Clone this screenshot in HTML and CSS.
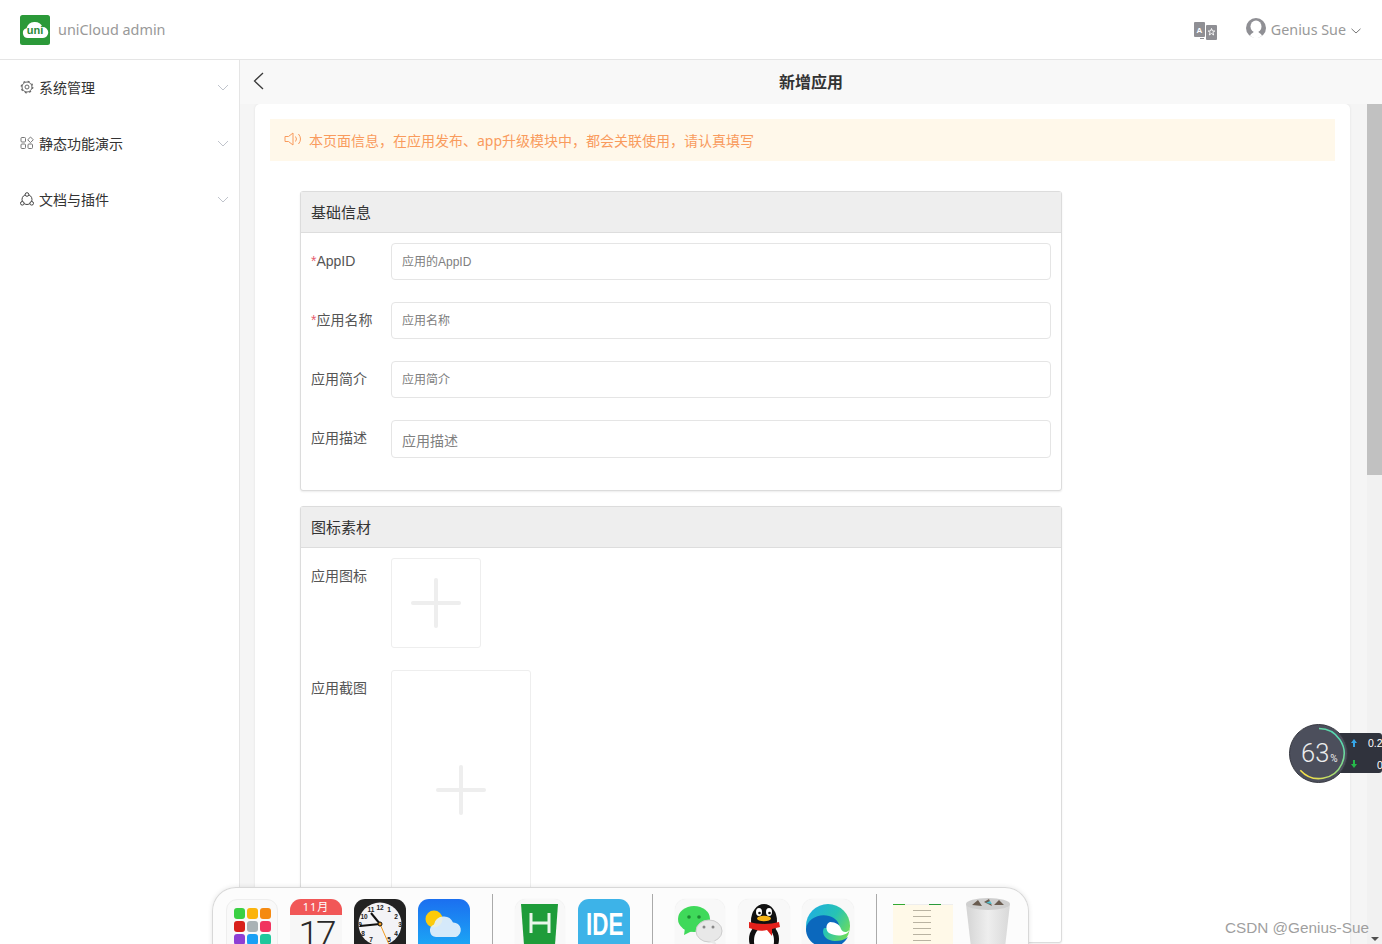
FILE: index.html
```html
<!DOCTYPE html>
<html lang="zh">
<head>
<meta charset="utf-8">
<title>uniCloud admin</title>
<link rel="stylesheet" href="styles.css">
</head>
<body>
<header class="topbar">
  <div class="brand">
    <svg class="logo" viewBox="0 0 30 30"><rect width="30" height="30" rx="2.500" fill="#2b9939"/><path d="M8 23a5 5 0 0 1-1.500-9.800a8.500 8.500 0 0 1 16-1.200a5.400 5.400 0 0 1 .5 11z" fill="#fff"/><text x="15" y="19" class="logo-text">uni</text></svg>
    <span class="brand-name">uniCloud admin</span>
  </div>
  <div class="top-actions">
    <svg class="lang" viewBox="0 0 23 18"><rect x="0" y="0" width="11" height="15" rx="1" fill="#8f8f94"/><rect x="12" y="3" width="11" height="15" rx="1" fill="#8f8f94"/><text x="5.500" y="10.500" class="lang-a">A</text><path d="M17.500 6.500l1 2.500h2.300l-1.900 1.500.8 2.500-2.200-1.500-2.200 1.500.8-2.500-1.900-1.500h2.300z" fill="none" stroke="#fff" stroke-width=".9"/><path d="M6 16.500h4" stroke="#8f8f94"/></svg>
    <div class="user">
      <svg class="avatar" viewBox="0 0 20 20"><circle cx="10" cy="10" r="10" fill="#8f8f94"/><ellipse cx="10" cy="8.500" rx="5.500" ry="6" fill="#fff"/><path d="M4 17.500c1.500-2.500 3-2.500 4-4h4c1 1.500 2.500 1.500 4 4c-2 2-3.500 2.500-6 2.500s-4-.5-6-2.500z" fill="#fff"/></svg>
      <span class="user-name">Genius Sue</span>
      <svg class="chev-small" viewBox="0 0 10 6"><path d="M.5.800 5 5 9.500.800" fill="none" stroke="#777" stroke-width="1"/></svg>
    </div>
  </div>
</header>

<div class="shell">
  <aside class="sidebar">
    <div class="menu-item">
      <svg class="menu-icon" viewBox="0 0 14 14"><circle cx="7" cy="7" r="5" fill="none" stroke="#666" stroke-width="1"/><circle cx="7" cy="7" r="5.800" fill="none" stroke="#666" stroke-width="1.200" stroke-dasharray="2 2.550"/><circle cx="7" cy="7" r="2" fill="none" stroke="#666" stroke-width="1"/></svg>
      <span class="menu-label">系统管理</span>
      <svg class="chev" viewBox="0 0 12 7"><path d="M1 1l5 5 5-5" fill="none" stroke="#c0c4cc" stroke-width="1"/></svg>
    </div>
    <div class="menu-item">
      <svg class="menu-icon" viewBox="0 0 14 14"><rect x="1" y="1.500" width="4.500" height="4.500" rx="1" fill="none" stroke="#777"/><path d="M10.500 1l2.800 2.800-2.800 2.800-2.800-2.800z" fill="none" stroke="#777"/><rect x="1" y="8" width="4.500" height="4.500" rx="1" fill="none" stroke="#777"/><rect x="8" y="8" width="4.500" height="4.500" rx="1" fill="none" stroke="#777"/></svg>
      <span class="menu-label">静态功能演示</span>
      <svg class="chev" viewBox="0 0 12 7"><path d="M1 1l5 5 5-5" fill="none" stroke="#c0c4cc" stroke-width="1"/></svg>
    </div>
    <div class="menu-item">
      <svg class="menu-icon" viewBox="0 0 14 14"><circle cx="7" cy="7.500" r="5" fill="none" stroke="#444" stroke-width="1"/><circle cx="7" cy="2.500" r="1.800" fill="#fff" stroke="#444"/><circle cx="2.300" cy="11.300" r="1.800" fill="#fff" stroke="#444"/><circle cx="11.700" cy="11.300" r="1.800" fill="#fff" stroke="#444"/></svg>
      <span class="menu-label">文档与插件</span>
      <svg class="chev" viewBox="0 0 12 7"><path d="M1 1l5 5 5-5" fill="none" stroke="#c0c4cc" stroke-width="1"/></svg>
    </div>
  </aside>

  <main class="main">
    <div class="navbar">
      <svg class="back" viewBox="0 0 11 18"><path d="M10 1 1.500 9l8.500 8" fill="none" stroke="#3a3a3a" stroke-width="1.300"/></svg>
      <span class="nav-title">新增应用</span>
    </div>
    <div class="content">
      <div class="card">
        <div class="notice">
          <svg class="speaker" viewBox="0 0 18 14"><path d="M1 4.500h3.500L9 1v12L4.500 9.500H1z" fill="none" stroke="#f99b5d" stroke-width="1"/><path d="M11.500 4.500a4 4 0 0 1 0 5M14.500 2a8 8 0 0 1 0 10" fill="none" stroke="#f99b5d" stroke-width="1"/></svg>
          <span class="notice-text">本页面信息，在应用发布、app升级模块中，都会关联使用，请认真填写</span>
        </div>
        <section class="panel panel-basic">
          <h3 class="panel-head">基础信息</h3>
          <div class="panel-body">
            <div class="field"><label class="field-label"><i class="req">*</i>AppID</label><div class="input small">应用的AppID</div></div>
            <div class="field"><label class="field-label"><i class="req">*</i>应用名称</label><div class="input small">应用名称</div></div>
            <div class="field"><label class="field-label">应用简介</label><div class="input small">应用简介</div></div>
            <div class="field"><label class="field-label">应用描述</label><div class="input textarea">应用描述</div></div>
          </div>
        </section>
        <section class="panel panel-assets">
          <h3 class="panel-head">图标素材</h3>
          <div class="panel-body">
            <div class="field"><label class="field-label">应用图标</label><div class="upload upload-icon"><span class="plus"></span></div></div>
            <div class="field"><label class="field-label">应用截图</label><div class="upload upload-shot"><span class="plus"></span></div></div>
          </div>
        </section>
      </div>
      <div class="scrollbar">
        <div class="thumb"></div>
        <span class="arrow"></span>
      </div>
    </div>
  </main>
</div>

<div class="speed">
  <div class="speed-rates"><span class="rate"><i class="up"></i><b>0.2</b></span><span class="rate rate-low"><i class="down"></i><b class="rate-zero">0</b></span></div>
  <div class="gauge">
    <svg class="gauge-ring" viewBox="0 0 60 60"><defs><linearGradient id="g" x1="1" y1="0" x2=".2" y2="1"><stop offset="0" stop-color="#3bd6c6"/><stop offset=".6" stop-color="#9ade7a"/><stop offset="1" stop-color="#f4e04a"/></linearGradient></defs><circle cx="30" cy="30" r="29.500" fill="#4c4f5c"/><circle cx="30" cy="30" r="29.500" fill="none" stroke="#35373f"/><path d="M30.500 4.500A25.500 25.500 0 1 1 11.500 47" fill="none" stroke="url(#g)" stroke-width="1.600"/></svg>
    <span class="gauge-num">63<small>%</small></span>
  </div>
</div>

<div class="dock">
  <div class="tile tile-launch">
    <div class="dots"><i style="background:#3ad043"></i><i style="background:#fbb40d"></i><i style="background:#f58a11"></i><i style="background:#d8201a"></i><i style="background:#a9b2b5"></i><i style="background:#f1345f"></i><i style="background:#8e3fd4"></i><i style="background:#1aa0f5"></i><i style="background:#1fc79c"></i></div>
  </div>
  <div class="tile tile-cal"><div class="cal-top">11月</div><div class="cal-day">17</div></div>
  <svg class="tile" viewBox="0 0 52 60"><rect width="52" height="62" rx="11" fill="#222"/><circle cx="26" cy="25" r="21.500" fill="#f3f3f6"/><g class="clock-nums"><text x="26" y="11">12</text><text x="17" y="13">11</text><text x="10" y="20">10</text><text x="6" y="28">9</text><text x="9" y="37">8</text><text x="17" y="43">7</text><text x="35" y="13">1</text><text x="42" y="20">2</text><text x="46" y="28">3</text><text x="42" y="37">4</text><text x="35" y="43">5</text></g><path d="M26 25 17 14" stroke="#111" stroke-width="2"/><path d="M26 25 6 27" stroke="#111" stroke-width="2"/><path d="M26 25 37 50" stroke="#f19a1e" stroke-width="1"/><circle cx="26" cy="25" r="2" fill="#f19a1e" stroke="#111"/></svg>
  <svg class="tile" viewBox="0 0 52 60"><defs><linearGradient id="sky" x1="0" y1="0" x2="0" y2="1"><stop offset="0" stop-color="#1b6ff0"/><stop offset="1" stop-color="#1cb8f7"/></linearGradient></defs><rect width="52" height="62" rx="11" fill="url(#sky)"/><circle cx="16" cy="20" r="8.500" fill="#fccb0a"/><path d="M18 38a6.500 6.500 0 0 1-2-12.500a10 10 0 0 1 19-2a7.500 7.500 0 0 1 3 14.500z" fill="#e3f0fa" opacity=".93"/></svg>
  <span class="dock-sep"></span>
  <div class="tile tile-soft tile-narrow"><svg class="full" viewBox="0 0 50 60"><path d="M6 5h37l-3 41-16 9-15-9z" fill="#1e9c3a"/><path d="M16 14v20M34 14v20M16 24h18" stroke="#e9f6ea" stroke-width="3" fill="none"/></svg></div>
  <div class="tile tile-ide"><span class="ide-text">IDE</span></div>
  <span class="dock-sep"></span>
  <div class="tile tile-soft tile-narrow"><svg class="full" viewBox="0 0 50 60"><ellipse cx="19" cy="20" rx="16" ry="13" fill="#3fd95a"/><path d="M10 29l-1 7 8-4z" fill="#3fd95a"/><circle cx="14" cy="18" r="1.800" fill="#1e8a33"/><circle cx="24" cy="18" r="1.800" fill="#1e8a33"/><ellipse cx="34" cy="32" rx="13" ry="11" fill="#e8e8e8" stroke="#ccc"/><path d="M39 41l3 5-8-3z" fill="#e8e8e8"/><circle cx="29" cy="28" r="1.500" fill="#888"/><circle cx="38" cy="28" r="1.500" fill="#888"/></svg></div>
  <div class="tile tile-soft"><svg class="full" viewBox="0 0 52 60"><ellipse cx="26" cy="22" rx="13" ry="17" fill="#111"/><ellipse cx="26" cy="40" rx="15" ry="16" fill="#111"/><ellipse cx="26" cy="42" rx="10" ry="14" fill="#fff"/><ellipse cx="21" cy="13" rx="3" ry="4" fill="#fff"/><ellipse cx="31" cy="13" rx="3" ry="4" fill="#fff"/><circle cx="21.500" cy="14" r="1.300" fill="#111"/><circle cx="31.500" cy="14" r="1.300" fill="#111"/><ellipse cx="26" cy="19.500" rx="7" ry="2.800" fill="#f7b416"/><path d="M11 23c9 2.500 21 2.500 30 0l1 5-8 2v7l-5-6c-4 1-8 1-11 0l-7-2z" fill="#e3201b"/></svg></div>
  <div class="tile tile-soft"><svg class="full" viewBox="0 0 52 60"><defs><linearGradient id="edge" x1="0" y1="0" x2="1" y2=".6"><stop offset="0" stop-color="#1dabe8"/><stop offset=".6" stop-color="#27c3b4"/><stop offset="1" stop-color="#6ddc5d"/></linearGradient></defs><circle cx="26" cy="27" r="22" fill="url(#edge)"/><path d="M4 30C5 20 17 14 27 17c7 2 11 7 10 12H22c-3 5 1 13 11 13 5 0 9-1 13-4-5 8-12 12-21 11C13 48 4 41 4 30z" fill="#0b68bd"/><path d="M28 23c6 0 10 3 11 7 2 5 9 3 9-1l-1 3c-3 5-13 6-20 2-4-3-3-10 1-11z" fill="#fff"/></svg></div>
  <span class="dock-sep"></span>
  <div class="tile thumb-doc">
    <div class="doc-top"></div>
    <div class="doc-lines"><i></i><i></i><i></i><i></i><i></i><i></i></div>
    <div class="doc-foot"><span class="doc-green"></span></div>
  </div>
  <svg class="trash" viewBox="0 0 46 60"><defs><linearGradient id="bin" x1="0" x2="1"><stop offset="0" stop-color="#d4d4d4"/><stop offset=".5" stop-color="#eee"/><stop offset="1" stop-color="#d8d8d8"/></linearGradient></defs><path d="M1 8h44l-6 52H7z" fill="url(#bin)"/><ellipse cx="23" cy="8" rx="22" ry="6" fill="#cfcfcf"/><path d="M7 9l6-5 4 6zM19 6l5-3 3 7zM29 9l5-5 5 5z" fill="#6a5c50"/><path d="M21 7l4-2 2 3z" fill="#4ec6d8"/></svg>
</div>

<div class="watermark">CSDN @Genius-Sue</div>
</body>
</html>
```
FILE: styles.css
```css
* { box-sizing: border-box; }
html, body { margin: 0; height: 100%; overflow: hidden; }
body {
  position: relative;
  width: 1382px;
  height: 944px;
  display: flex;
  flex-direction: column;
  font-family: "Noto Sans", "Noto Sans CJK SC", sans-serif;
  font-size: 14px;
  color: #333;
  background: #fff;
}
.topbar {
  height: 60px;
  flex: none;
  display: flex;
  justify-content: space-between;
  align-items: center;
  padding: 0 21px 0 20px;
  border-bottom: 1px solid #e5e5e5;
  background: #fff;
}
.brand { display: flex; align-items: center; gap: 8px; }
.logo { width: 30px; height: 30px; display: block; }
.logo-text { font-family: "Liberation Sans", sans-serif; font-size: 11px; font-weight: 700; fill: #2b8a3a; text-anchor: middle; }
.brand-name { font-size: 14.400px; color: #999; }
.top-actions { display: flex; align-items: center; gap: 29px; }
.lang { width: 23px; height: 18px; display: block; margin-top: 3px; }
.lang-a { font-family: "Liberation Sans", sans-serif; font-size: 8px; font-weight: 700; fill: #fff; text-anchor: middle; }
.user { display: flex; align-items: center; gap: 5px; color: #999; }
.avatar { width: 20px; height: 20px; display: block; margin-top: -3px; }
.user-name { font-size: 14.300px; line-height: 20px; }
.chev-small { width: 10px; height: 6px; display: block; margin-top: 3px; }
.shell { flex: 1; min-height: 0; display: flex; }
.sidebar { width: 240px; flex: none; border-right: 1px solid #e5e5e5; background: #fff; }
.menu-item { height: 56px; display: flex; align-items: center; padding: 0 10px 2px 20px; color: #333; }
.menu-icon { width: 14px; height: 14px; display: block; margin-right: 5px; }
.menu-label { flex: 1; font-size: 14px; }
.chev { width: 12px; height: 7px; display: block; }
.main { flex: 1; min-width: 0; display: flex; flex-direction: column; background: #f5f5f5; }
.navbar {
  height: 44px;
  flex: none;
  position: relative;
  display: flex;
  align-items: center;
  justify-content: center;
  background: #f8f8f8;
}
.back { position: absolute; left: 13px; top: 12px; width: 11px; height: 18px; }
.nav-title { font-size: 16px; font-weight: 700; color: #333; margin-top: -2px; }
.content { flex: 1; min-height: 0; display: flex; justify-content: space-between; padding-left: 15px; }
.card {
  width: 1095px;
  height: 860px;
  padding: 15px;
  background: #fff;
  border-radius: 5px 5px 0 0;
  box-shadow: 0 0 3px rgba(0, 0, 0, .08);
}
.notice {
  height: 42px;
  display: flex;
  align-items: center;
  gap: 7px;
  padding-left: 14px;
  background: #fff8ea;
  color: #f99b5d;
  font-size: 14px;
}
.notice-text { line-height: 42px; padding-top: 2px; }
.speaker { width: 18px; height: 14px; display: block; margin-top: -3px; }
.panel {
  width: 762px;
  margin-left: 30px;
  background: #fff;
  border: 1px solid #dcdcdc;
  border-radius: 3px;
  box-shadow: 0 1px 2px rgba(0, 0, 0, .08);
}
.panel-basic { margin-top: 30px; height: 300px; }
.panel-assets { margin-top: 15px; height: 437px; }
.panel-head {
  margin: 0;
  height: 41px;
  padding-left: 10px;
  font-size: 15px;
  font-weight: 400;
  line-height: 40px;
  color: #333;
  background: #eee;
  border-bottom: 1px solid #ddd;
}
.panel-body { padding: 10px; }
.field { display: flex; margin-bottom: 22px; }
.field-label {
  width: 80px;
  flex: none;
  font-family: "Liberation Sans", "Noto Sans CJK SC", sans-serif;
  line-height: 36px;
  font-size: 14px;
  color: #555;
}
.req { font-style: normal; color: #e65d6e; }
.input {
  flex: 1;
  height: 37px;
  padding-left: 10px;
  font-family: "Liberation Sans", "Noto Sans CJK SC", sans-serif;
  line-height: 36px;
  border: 1px solid #e5e5e5;
  border-radius: 4px;
  color: #808080;
}
.small { font-size: 12px; }
.textarea { height: 38px; font-size: 14px; line-height: 40px; }
.upload {
  position: relative;
  display: flex;
  align-items: center;
  justify-content: center;
  border: 1px solid #eee;
  border-radius: 3px;
}
.upload-icon { width: 90px; height: 90px; }
.upload-shot { width: 140px; height: 240px; }
.plus { position: relative; width: 50px; height: 50px; display: block; }
.plus::before, .plus::after { content: ""; position: absolute; background: #eee; border-radius: 2px; }
.plus::before { left: 0; right: 0; top: 23px; height: 4px; }
.plus::after { top: 0; bottom: 0; left: 23px; width: 4px; }
.scrollbar { position: relative; width: 15px; flex: none; background: #f1f1f1; }
.thumb { height: 371px; background: #c1c1c1; }
.arrow {
  position: absolute;
  left: 4px;
  bottom: 3px;
  width: 0;
  height: 0;
  border: 4px solid transparent;
  border-top-color: #505050;
  border-bottom: 0;
}
.speed { position: absolute; left: 1288px; top: 723px; width: 94px; height: 61px; }
.speed-rates {
  position: absolute;
  left: 30px;
  top: 10px;
  width: 64px;
  height: 40px;
  padding-left: 33px;
  background: #30333d;
  border-radius: 0 3px 3px 0;
  display: flex;
  flex-direction: column;
}
.rate { position: relative; display: flex; height: 20px; align-items: center; justify-content: flex-end; font-size: 10.500px; color: #fff; white-space: nowrap; }
.rate-low { top: 2px; }
.rate b { font-weight: 400; position: absolute; left: 17px; font-family: "Liberation Sans", sans-serif; }
.rate .rate-zero { left: 26px; }
.up, .down { position: absolute; left: 0; top: 6px; width: 0; height: 0; border: 3.500px solid transparent; }
.rate .up { left: 0; border-bottom: 4px solid #36a6e8; border-top: 0; }
.rate .up::after, .rate .down::after { content: ""; position: absolute; left: -1px; width: 2px; height: 4px; }
.rate .up::after { top: 4px; background: #36a6e8; }
.rate .down { border-top: 4px solid #25b94a; border-bottom: 0; top: 9px; }
.rate .down::after { top: -8px; background: #25b94a; }
.gauge { position: absolute; left: 1px; top: 1px; width: 59px; height: 59px; }
.gauge-ring { position: absolute; inset: 0; width: 59px; height: 59px; display: block; }
.gauge-num {
  position: absolute;
  left: 12px;
  top: 14px;
  font-family: Roboto, "Liberation Sans", sans-serif;
  font-weight: 300;
  font-size: 25.500px;
  line-height: 31px;
  color: #eceded;
  white-space: nowrap;
}
.gauge-num small { font-size: 10px; font-weight: 400; margin-left: 1px; }
.dock {
  position: absolute;
  left: 212px;
  top: 887px;
  width: 817px;
  height: 70px;
  display: flex;
  align-items: flex-start;
  padding: 11px 0 0 13px;
  background: rgba(252, 252, 252, .97);
  border: 1px solid #d8d8d8;
  border-bottom: 0;
  border-radius: 24px 24px 0 0;
  box-shadow: 0 0 5px rgba(0, 0, 0, .1);
}
.tile { width: 52px; height: 60px; flex: none; margin-right: 12px; display: block; overflow: hidden; }
.tile-narrow { width: 50px; margin-right: 13px; }
.tile-launch {
  padding: 8px 7px;
  background: #f9f9f9;
  border: 1px solid #eee;
  border-radius: 11px;
}
.dots { display: grid; grid-template-columns: repeat(3, 11px); gap: 2px; }
.dots i { width: 11px; height: 11px; border-radius: 3px; }
.tile-cal { border-radius: 11px; background: #f7f7f7; text-align: center; }
.cal-top { height: 16px; line-height: 16px; background: #f15757; color: #fff; font-size: 11px; letter-spacing: 1px; }
.cal-day { font-family: Roboto, "Liberation Sans", sans-serif; font-size: 37px; line-height: 40px; letter-spacing: -3px; color: #2a2a2a; font-weight: 300; }
.clock-nums text { font-family: "Liberation Sans", sans-serif; font-size: 6.500px; font-weight: 700; fill: #222; text-anchor: middle; }
.dock-sep { width: 1px; height: 50px; flex: none; background: #aaa; margin: -5px 22px 0 10px; }
.tile-soft { background: #f8f8f8; border-radius: 11px; box-shadow: 0 0 1px rgba(0, 0, 0, .1); }
.full { width: 100%; height: 100%; display: block; }
.tile-ide {
  background: #3db3e8;
  border-radius: 11px;
  color: #fff;
  text-align: center;
  font-family: "Liberation Sans", sans-serif;
  font-size: 32px;
  font-weight: 700;
  line-height: 50px;
}
.ide-text { display: inline-block; transform: scaleX(.7); }
.thumb-doc { width: 60px; margin: 5px 12px 0 -6px; height: 52px; background: #fff9e8; position: relative; }
.doc-top { height: 1px; background: linear-gradient(90deg, #3a3 20%, #eee 20%, #eee 60%, #2a9a3a 60%, #2a9a3a 80%, #eee 80%); }
.doc-lines { display: flex; flex-direction: column; gap: 5px; padding: 5px 10px 0 20px; }
.doc-lines i { height: 1px; background: #b9b3a2; width: 60%; }
.doc-foot { position: absolute; left: 0; right: 0; bottom: 0; height: 12px; background: linear-gradient(90deg, #e9c9b9 0 20%, #f6f6f6 20% 25%, #c9d3e6 25% 45%, #f6f6f6 45%); }
.doc-green { position: absolute; right: 2px; top: 2px; width: 12px; height: 10px; background: #1f9f3a; }
.trash { width: 46px; height: 60px; flex: none; margin-top: -3px; }
.watermark {
  position: absolute;
  left: 1225px;
  top: 918px;
  font-family: "Liberation Sans", sans-serif;
  font-size: 15.300px;
  line-height: 20px;
  color: #9f9f9f;
  white-space: nowrap;
}
```
